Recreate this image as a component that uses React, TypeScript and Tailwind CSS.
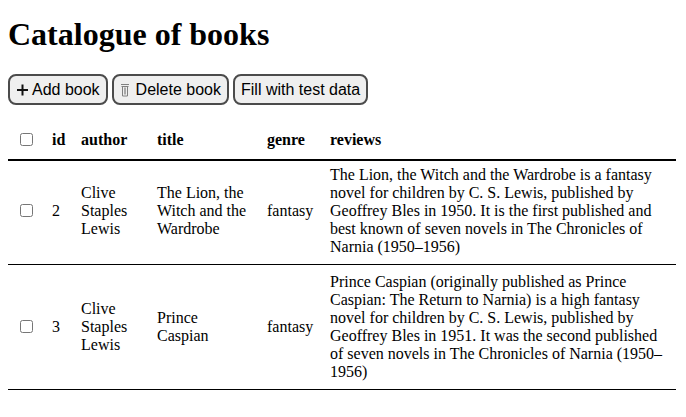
const books = [
  {
    id: 2,
    author: "Clive Staples Lewis",
    title: "The Lion, the Witch and the Wardrobe",
    genre: "fantasy",
    reviews:
      "The Lion, the Witch and the Wardrobe is a fantasy novel for children by C. S. Lewis, published by Geoffrey Bles in 1950. It is the first published and best known of seven novels in The Chronicles of Narnia (1950–1956)",
  },
  {
    id: 3,
    author: "Clive Staples Lewis",
    title: "Prince Caspian",
    genre: "fantasy",
    reviews:
      "Prince Caspian (originally published as Prince Caspian: The Return to Narnia) is a high fantasy novel for children by C. S. Lewis, published by Geoffrey Bles in 1951. It was the second published of seven novels in The Chronicles of Narnia (1950–1956)",
  },
];

const btn =
  "inline-flex items-center h-[31px] rounded-[8px] border-2 border-[#4b4b4b] bg-[#efefef] px-[6px] text-[16px] text-black font-['Liberation_Sans',sans-serif] whitespace-nowrap";
const th = "px-2 pt-2 pb-[9px] text-left font-bold";
const box = "mx-1 mt-[2px] mb-[4px] align-middle h-[13px] w-[13px]";

function Plus() {
  return (
    <svg width="16" height="12" viewBox="0 0 16 12" className="shrink-0">
      <path d="M6.5 0.5v11M1 6h11" stroke="#111" strokeWidth="2" fill="none" />
    </svg>
  );
}

function Trash() {
  return (
    <svg width="16" height="14" viewBox="0 0 16 14" className="shrink-0">
      <path d="M1 1.5h8M1.5 3.5h7M2.5 3.5v9.5h5v-9.5" stroke="#808080" strokeWidth="1" fill="none" />
      <path d="M4.5 4.5v7M5.5 4.5v7" stroke="#a8a8a8" strokeWidth="1" fill="none" />
    </svg>
  );
}

export default function App() {
  return (
    <div className="bg-white p-2 font-['Liberation_Serif',serif] text-[16px] leading-[18px] text-black">
      <h1 className="my-[8px] text-[32px] font-bold leading-[37px]">Catalogue of books</h1>
      <div className="mt-[21px] flex gap-1">
        <button className={btn}>
          <Plus />
          Add book
        </button>
        <button className={btn}>
          <Trash />
          Delete book
        </button>
        <button className={btn}>Fill with test data</button>
      </div>
      <table className="mt-[17px] w-[668px] table-fixed border-collapse">
        <thead>
          <tr className="border-b-2 border-black">
            <th className={`${th} w-[36px]`}>
              <input type="checkbox" className={box} />
            </th>
            <th className={`${th} w-[29px]`}>id</th>
            <th className={`${th} w-[76px]`}>author</th>
            <th className={`${th} w-[110px]`}>title</th>
            <th className={`${th} w-[63px]`}>genre</th>
            <th className={th}>reviews</th>
          </tr>
        </thead>
        <tbody>
          {books.map((b, i) => {
            const td = i === 0 ? "px-2 pt-[5px] pb-[8px] align-middle" : "px-2 py-2 align-middle";
            return (
              <tr key={b.id} className="border-b border-black">
                <td className={td}>
                  <input type="checkbox" className={box} />
                </td>
                <td className={td}>{b.id}</td>
                <td className={td}>{b.author}</td>
                <td className={td}>{b.title}</td>
                <td className={td}>{b.genre}</td>
                <td className={td}>{b.reviews}</td>
              </tr>
            );
          })}
        </tbody>
      </table>
    </div>
  );
}
